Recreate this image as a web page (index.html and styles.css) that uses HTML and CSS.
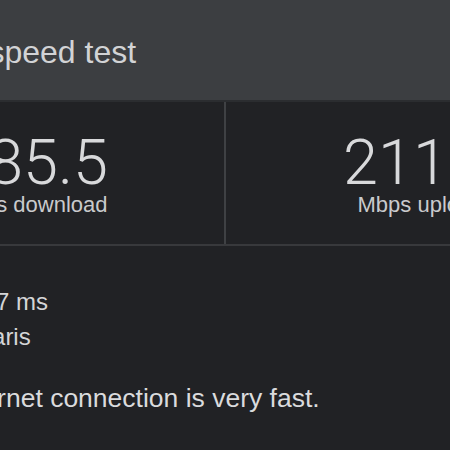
FILE: index.html
```html
<!DOCTYPE html>
<html lang="en">
<head>
    <meta charset="UTF-8">
    <meta name="viewport" content="width=device-width, initial-scale=1.0">
    <title>Internet speed test</title>
    <link rel="stylesheet" href="styles.css">
</head>
<body>
    <div class="page">
        <header class="top">
            <h1 class="title">Internet speed test</h1>
        </header>

        <section class="tiles">
            <div class="tile">
                <div class="num">185.5</div>
                <div class="unit">Mbps download</div>
            </div>
            <div class="tile">
                <div class="num">211.3</div>
                <div class="unit">Mbps upload</div>
            </div>
        </section>

        <section class="details">
            <p class="stat">Latency 17 ms</p>
            <p class="stat">Server: Paris</p>
            <p class="verdict">Your Internet connection is very fast.</p>
        </section>
    </div>
</body>
</html>
```

FILE: styles.css
```css
html, body {
    margin: 0;
    background-color: #212225;
    overflow: hidden;
}
body {
    font-family: "Liberation Sans", Arial, sans-serif;
    color: #d4d5d7;
}
.page {
    width: 778px;
    margin-left: -163px;
}
.top {
    height: 100px;
    box-sizing: border-box;
    padding: 34px 0 0 34px;
    background-color: #3c3e41;
}
.title {
    margin: 0;
    font-size: 32px;
    font-weight: normal;
    line-height: 37px;
    color: #d2d3d5;
}
.tiles {
    display: grid;
    grid-template-columns: 1fr 1fr;
    border-top: 2px solid #2b2d30;
    border-bottom: 2px solid #38393c;
}
.tile {
    padding: 31px 0 26px;
    text-align: center;
}
.tile:first-child {
    border-right: 2px solid #3f4144;
}
.num {
    font-family: Roboto, "Liberation Sans", sans-serif;
    font-weight: 300;
    font-size: 63px;
    line-height: 60px;
    color: #d8d9db;
}
.unit {
    margin-top: -1px;
    font-size: 22px;
    line-height: 26px;
    color: #c9cacc;
}
.details {
    padding: 38px 0 0 55px;
}
.stat {
    margin: 0;
    font-size: 24px;
    line-height: 35px;
}
.verdict {
    margin: 29px 0 0;
    font-size: 26.5px;
    line-height: 30px;
    color: #dadbdd;
}
```
